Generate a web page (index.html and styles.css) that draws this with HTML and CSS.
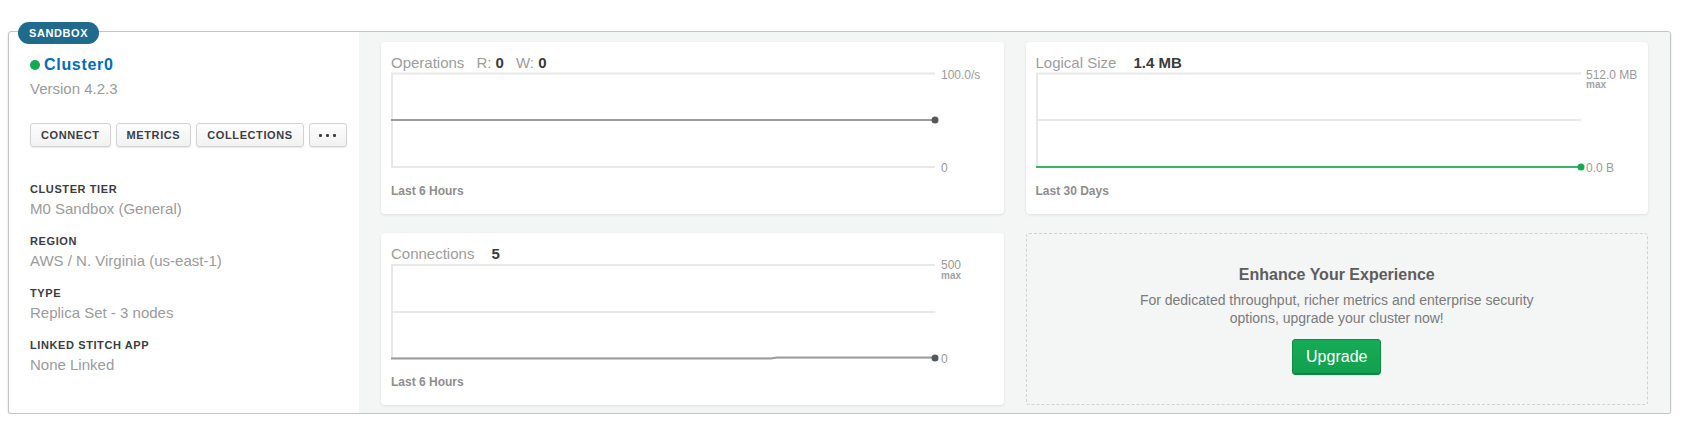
FILE: index.html
```html
<!DOCTYPE html>
<html lang="en">
<head>
<meta charset="utf-8">
<title>Cluster0</title>
<link rel="stylesheet" href="styles.css">
</head>
<body>
<div class="cluster">
  <span class="badge">SANDBOX</span>
  <div class="info">
    <div class="name-row"><span class="dot"></span><span class="name">Cluster0</span></div>
    <div class="version">Version 4.2.3</div>
    <div class="actions">
      <button class="btn">CONNECT</button>
      <button class="btn">METRICS</button>
      <button class="btn">COLLECTIONS</button>
      <button class="btn more"><span></span><span></span><span></span></button>
    </div>
    <dl class="details">
      <div class="detail"><dt>CLUSTER TIER</dt><dd>M0 Sandbox (General)</dd></div>
      <div class="detail"><dt>REGION</dt><dd>AWS / N. Virginia (us-east-1)</dd></div>
      <div class="detail"><dt>TYPE</dt><dd>Replica Set - 3 nodes</dd></div>
      <div class="detail detail-last"><dt>LINKED STITCH APP</dt><dd>None Linked</dd></div>
    </dl>
  </div>
  <div class="metrics">
    <div class="card">
      <div class="card-head">Operations<span class="stat">R: <b class="val">0</b></span><span class="stat">W: <b class="val">0</b></span></div>
      <svg class="chart" height="108">
        <line class="grid" x1="1" y1="5.5" x2="1" y2="99"/>
        <line class="grid" x1="0" y1="5.5" x2="544" y2="5.5"/>
        <line class="grid" x1="0" y1="99" x2="544" y2="99"/>
        <line class="series" x1="0" y1="52" x2="544" y2="52"/>
        <circle class="marker" cx="544" cy="52" r="3.5"/>
        <text class="axis" x="550" y="10.5">100.0/s</text>
        <text class="axis" x="550" y="103.5">0</text>
      </svg>
      <div class="range">Last 6 Hours</div>
    </div>
    <div class="card">
      <div class="card-head">Logical Size<span class="stat-lg"><b class="val">1.4 MB</b></span></div>
      <svg class="chart" height="108">
        <line class="grid" x1="1" y1="5.5" x2="1" y2="99"/>
        <line class="grid" x1="0" y1="5.5" x2="545" y2="5.5"/>
        <line class="grid" x1="0" y1="52" x2="545" y2="52"/>
        <line class="series-green" x1="0" y1="99" x2="545" y2="99"/>
        <circle class="marker-green" cx="545" cy="99" r="3.5"/>
        <text class="axis" x="550" y="10.5">512.0 MB</text>
        <text class="axis-sub" x="550" y="20">max</text>
        <text class="axis" x="550" y="103.5">0.0 B</text>
      </svg>
      <div class="range">Last 30 Days</div>
    </div>
    <div class="card">
      <div class="card-head">Connections<span class="stat-lg"><b class="val">5</b></span></div>
      <svg class="chart" height="108">
        <line class="grid" x1="1" y1="6" x2="1" y2="99"/>
        <line class="grid" x1="0" y1="6" x2="544" y2="6"/>
        <line class="grid" x1="0" y1="53" x2="544" y2="53"/>
        <line class="grid" x1="0" y1="99" x2="544" y2="99"/>
        <polyline class="series" points="0,99.5 380,99.5 386,98.5 544,98.5"/>
        <circle class="marker" cx="544" cy="99" r="3.5"/>
        <text class="axis" x="550" y="9.5">500</text>
        <text class="axis-sub" x="550" y="19.5">max</text>
        <text class="axis" x="550" y="103.5">0</text>
      </svg>
      <div class="range">Last 6 Hours</div>
    </div>
    <div class="upsell">
      <h3 class="upsell-title">Enhance Your Experience</h3>
      <p class="upsell-text">For dedicated throughput, richer metrics and enterprise security<br>options, upgrade your cluster now!</p>
      <button class="upgrade">Upgrade</button>
    </div>
  </div>
</div>
</body>
</html>
```
FILE: styles.css
```css
body {
  margin: 0;
  background: #ffffff;
  font-family: "Liberation Sans", Arial, sans-serif;
}

.cluster {
  position: relative;
  display: flex;
  margin: 31px 15px 0 8px;
  border: 1px solid #c4c4c4;
  border-radius: 3px;
  box-shadow: 0 1px 2px rgba(0, 0, 0, 0.18);
  background: #fff;
}

.badge {
  position: absolute;
  top: -10px;
  left: 9px;
  height: 22px;
  padding: 0 11px;
  border-radius: 11px;
  background: #1f6a8d;
  color: #fff;
  font-size: 11px;
  font-weight: bold;
  line-height: 22px;
  letter-spacing: 0.6px;
}

.info {
  flex: none;
  width: 350px;
  box-sizing: border-box;
  padding: 23px 10px 0 21px;
}

.name-row {
  display: flex;
  align-items: center;
  gap: 4px;
  height: 20px;
}

.dot {
  width: 10px;
  height: 10px;
  border-radius: 50%;
  background: #13aa52;
}

.name {
  font-size: 16px;
  font-weight: bold;
  line-height: 20px;
  letter-spacing: 0.7px;
  color: #006cbc;
}

.version {
  margin-top: 4px;
  font-size: 15px;
  line-height: 20px;
  color: #9b9b9b;
}

.actions {
  display: flex;
  gap: 5px;
  margin-top: 24px;
}

.btn {
  flex: none;
  height: 24px;
  margin: 0;
  padding: 0 10px;
  border: 1px solid #d2d2d2;
  border-radius: 3px;
  background: linear-gradient(#fdfdfd, #f1f2f2);
  box-shadow: 0 1px 1px rgba(0, 0, 0, 0.08);
  font-family: "Liberation Sans", Arial, sans-serif;
  font-size: 11px;
  font-weight: bold;
  line-height: 22px;
  letter-spacing: 0.6px;
  color: #3c4043;
}

.more {
  display: flex;
  align-items: center;
  justify-content: center;
  gap: 4px;
  width: 38px;
  padding: 0;
}

.more span {
  width: 3px;
  height: 3px;
  border-radius: 1px;
  background: #3c4043;
}

.details {
  margin: 35px 0 0;
}

.detail + .detail {
  margin-top: 15px;
}

.detail-last dd {
  margin-top: 5px;
}

.detail dt {
  font-size: 11px;
  font-weight: bold;
  line-height: 14px;
  letter-spacing: 0.6px;
  color: #3a3d40;
}

.detail dd {
  margin: 3px 0 0;
  font-size: 15px;
  line-height: 20px;
  color: #9b9b9b;
}

.metrics {
  flex: 1;
  display: grid;
  grid-template-columns: 1fr 1fr;
  grid-template-rows: 172px 172px;
  gap: 19px 22px;
  padding: 10px 22px 8px;
  background: #f4f5f5;
  border-radius: 0 3px 3px 0;
}

.card {
  padding: 12px 9px 0 10px;
  background: #fff;
  border-radius: 4px;
  box-shadow: 0 1px 3px rgba(0, 0, 0, 0.09);
  overflow: hidden;
}

.card-head {
  font-size: 15px;
  line-height: 18px;
  color: #9d9d9d;
  white-space: nowrap;
}

.stat {
  margin-left: 12px;
}

.stat-lg {
  margin-left: 17px;
}

.val {
  font-weight: bold;
  color: #3a3a3a;
}

.chart {
  display: block;
  width: 100%;
  margin-top: -4px;
  overflow: hidden;
}

.grid {
  stroke: #e8e8e8;
  stroke-width: 2;
}

.series {
  fill: none;
  stroke: #9c9c9c;
  stroke-width: 2;
}

.series-green {
  stroke: #3db36a;
  stroke-width: 2;
}

.marker {
  fill: #54585b;
}

.marker-green {
  fill: #13aa52;
}

.axis {
  font-family: "Liberation Sans", Arial, sans-serif;
  font-size: 12px;
  fill: #9a9a9a;
}

.axis-sub {
  font-family: "Liberation Sans", Arial, sans-serif;
  font-size: 10px;
  font-weight: bold;
  fill: #a3a3a3;
}

.range {
  margin-top: 8px;
  font-size: 12px;
  font-weight: bold;
  line-height: 14px;
  color: #8e8e8e;
}

.upsell {
  display: flex;
  flex-direction: column;
  align-items: center;
  padding-top: 31px;
  border: 1px dashed #d2d2d2;
  border-radius: 3px;
  text-align: center;
}

.upsell-title {
  margin: 0;
  font-size: 16px;
  font-weight: bold;
  line-height: 20px;
  color: #5d5d5d;
}

.upsell-text {
  margin: 6px 0 0;
  font-size: 14px;
  line-height: 18px;
  color: #7b7b7b;
}

.upgrade {
  height: 36px;
  margin-top: 12px;
  padding: 0 13px;
  border: 1px solid #0f8c45;
  border-radius: 3px;
  background: linear-gradient(#16ab57, #12a04f);
  box-shadow: inset 0 -1px 0 #0d8040;
  font-family: "Liberation Sans", Arial, sans-serif;
  font-size: 16px;
  color: #fff;
}
```
